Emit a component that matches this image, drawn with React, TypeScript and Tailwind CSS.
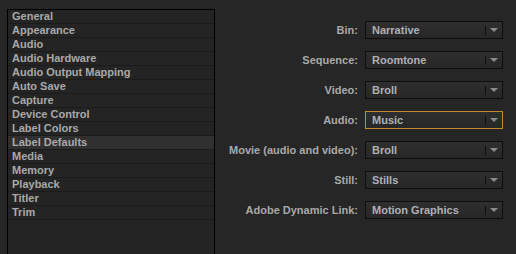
const PANELS = [
  'General',
  'Appearance',
  'Audio',
  'Audio Hardware',
  'Audio Output Mapping',
  'Auto Save',
  'Capture',
  'Device Control',
  'Label Colors',
  'Label Defaults',
  'Media',
  'Memory',
  'Playback',
  'Titler',
  'Trim',
];

const FIELDS: { label: string; value: string; focused?: boolean }[] = [
  { label: 'Bin:', value: 'Narrative' },
  { label: 'Sequence:', value: 'Roomtone' },
  { label: 'Video:', value: 'Broll' },
  { label: 'Audio:', value: 'Music', focused: true },
  { label: 'Movie (audio and video):', value: 'Broll' },
  { label: 'Still:', value: 'Stills' },
  { label: 'Adobe Dynamic Link:', value: 'Motion Graphics' },
];

function Select({ value, focused }: { value: string; focused?: boolean }) {
  return (
    <div
      className={`w-[138px] h-[18px] flex items-center border bg-gradient-to-b from-[#2f2f2f] to-[#272727] ${
        focused ? 'border-[#c58a2a]' : 'border-[#0e0e0e]'
      }`}
    >
      <span className="flex-1 pl-[6px] text-[#aeb0b6] leading-none">{value}</span>
      <span className="w-px h-[9px] bg-[#101010]" />
      <svg width="8" height="4" viewBox="0 0 8 4" className="mx-[4px]">
        <path d="M0 0h8L4 4z" fill="#8a8a8a" />
      </svg>
    </div>
  );
}

export default function App() {
  return (
    <div
      className="w-[516px] h-[254px] overflow-hidden bg-[#262626] flex text-[11px] font-bold text-[#a9a9a9]"
      style={{ fontFamily: '"Liberation Sans", Arial, sans-serif' }}
    >
      <div className="ml-[7px] mt-[9px] w-[208px] h-[260px] shrink-0 border border-black bg-[#242424]">
        {PANELS.map((p) => (
          <div
            key={p}
            className={`h-[14px] pl-[4px] flex items-center border-b border-[#1b1b1b] leading-none ${
              p === 'Label Defaults' ? 'bg-[#303030]' : ''
            }`}
          >
            {p}
          </div>
        ))}
      </div>
      <div className="flex-1 flex flex-col items-end gap-[12px] pt-[21px] pr-[13px]">
        {FIELDS.map((f) => (
          <div key={f.label} className="flex items-center gap-[7px]">
            <span className="text-right leading-none">{f.label}</span>
            <Select value={f.value} focused={f.focused} />
          </div>
        ))}
      </div>
    </div>
  );
}
